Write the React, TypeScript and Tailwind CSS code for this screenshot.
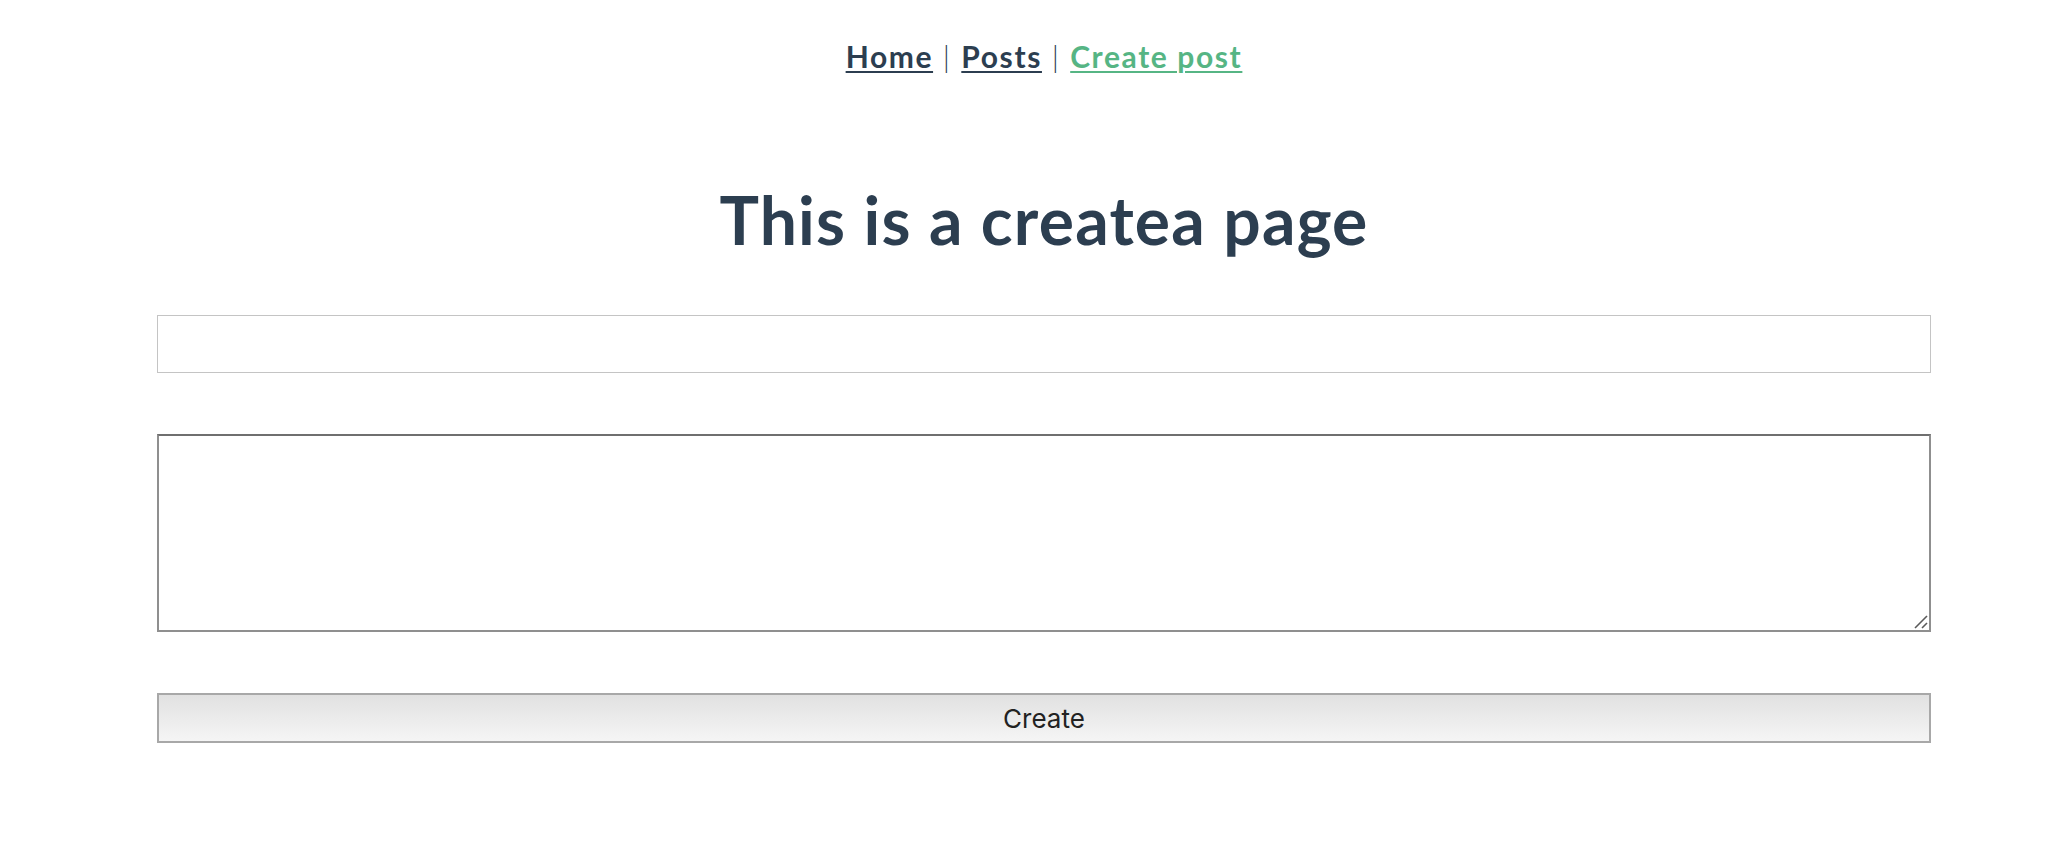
import React from 'react';

// Vue-style "create post" page: centred nav, title, two fields and a full-width button.

export default function App() {
    return (
        <div className="min-h-screen bg-white pl-[157px] pr-[125px] font-['Lato',sans-serif] text-[#2c3e50]">
            {/* Nav */}
            <nav className="pt-[38px] text-center text-[30px] leading-[36px] tracking-[1.6px]">
                <a href="#" className="font-bold underline decoration-2 underline-offset-[3px]">Home</a>
                <span className="font-light"> | </span>
                <a href="#" className="font-bold underline decoration-2 underline-offset-[3px]">Posts</a>
                <span className="font-light"> | </span>
                <a href="#" className="font-bold text-[#56b584] underline decoration-2 underline-offset-[3px]">Create post</a>
            </nav>

            <h1 className="mt-[113px] text-center text-[66px] font-bold leading-none tracking-[1.2px]">This is a createa page</h1>

            {/* Form */}
            <form className="mt-[62px] flex flex-col" onSubmit={(e) => e.preventDefault()}>
                <input type="text" className="h-[58px] w-full border border-[#c4c4c4] bg-white px-2 text-[24px] outline-none" />
                <div className="relative mt-[61px]">
                    <textarea className="block h-[198px] w-full resize-none border-2 border-[#8f8f8f] border-t-[#6f6f6f] bg-white p-2 text-[24px] outline-none" />
                    <svg className="pointer-events-none absolute bottom-[3px] right-[3px]" width="15" height="15" viewBox="0 0 15 15">
                        <path d="M2 14 L14 2" stroke="#5a5a5a" strokeWidth="1.6" />
                        <path d="M9 14 L14 9" stroke="#5a5a5a" strokeWidth="1.6" />
                    </svg>
                </div>
                <button
                    type="submit"
                    className="mt-[61px] h-[50px] w-full border-2 border-[#a8a8a8] bg-gradient-to-b from-[#e1e1e1] to-[#f5f5f5] font-['Inter',sans-serif] text-[26px] text-[#222]"
                >
                    Create
                </button>
            </form>
        </div>
    );
}
